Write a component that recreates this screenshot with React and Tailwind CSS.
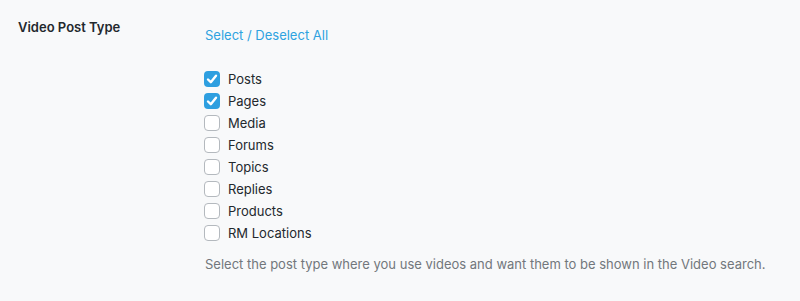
import { useState } from "react";

const TYPES = [
  { key: "posts", label: "Posts", on: true },
  { key: "pages", label: "Pages", on: true },
  { key: "media", label: "Media", on: false },
  { key: "forums", label: "Forums", on: false },
  { key: "topics", label: "Topics", on: false },
  { key: "replies", label: "Replies", on: false },
  { key: "products", label: "Products", on: false },
  { key: "rm_locations", label: "RM Locations", on: false },
];

function Box({ checked, onClick }) {
  return (
    <button
      type="button"
      onClick={onClick}
      className={`w-4 h-4 rounded-[4px] flex items-center justify-center flex-shrink-0 ${
        checked ? "bg-[#2e9fe0]" : "bg-white border border-[#b4b9be]"
      }`}
    >
      {checked && (
        <svg viewBox="0 0 16 16" className="w-4 h-4">
          <path d="M4 8.5 L6.8 11.2 L12 4.8" fill="none" stroke="white" strokeWidth="2.4" strokeLinecap="round" strokeLinejoin="round" />
        </svg>
      )}
    </button>
  );
}

export default function App() {
  const [sel, setSel] = useState(() => Object.fromEntries(TYPES.map((t) => [t.key, t.on])));
  const allOn = TYPES.every((t) => sel[t.key]);

  return (
    <div className="w-[800px] h-[301px] bg-[#f8f9fa] font-['Inter',sans-serif] text-[13px] text-[#23282d] flex">
      {/* Label column */}
      <div className="w-[204px] pl-[18px] pt-[18px] font-semibold">Video Post Type</div>

      {/* Field */}
      <div className="pt-[26px]">
        <button
          type="button"
          onClick={() => setSel(Object.fromEntries(TYPES.map((t) => [t.key, !allOn])))}
          className="text-[#2ea2e0] ml-px"
        >
          Select / Deselect All
        </button>

        <div className="mt-[25px] flex flex-col gap-[6px]">
          {TYPES.map((t) => (
            <label key={t.key} className="flex items-center gap-2 h-4 leading-4">
              <Box checked={sel[t.key]} onClick={() => setSel({ ...sel, [t.key]: !sel[t.key] })} />
              <span>{t.label}</span>
            </label>
          ))}
        </div>

        <p className="mt-[14px] ml-px text-[#72777c]">
          Select the post type where you use videos and want them to be shown in the Video search.
        </p>
      </div>
    </div>
  );
}
